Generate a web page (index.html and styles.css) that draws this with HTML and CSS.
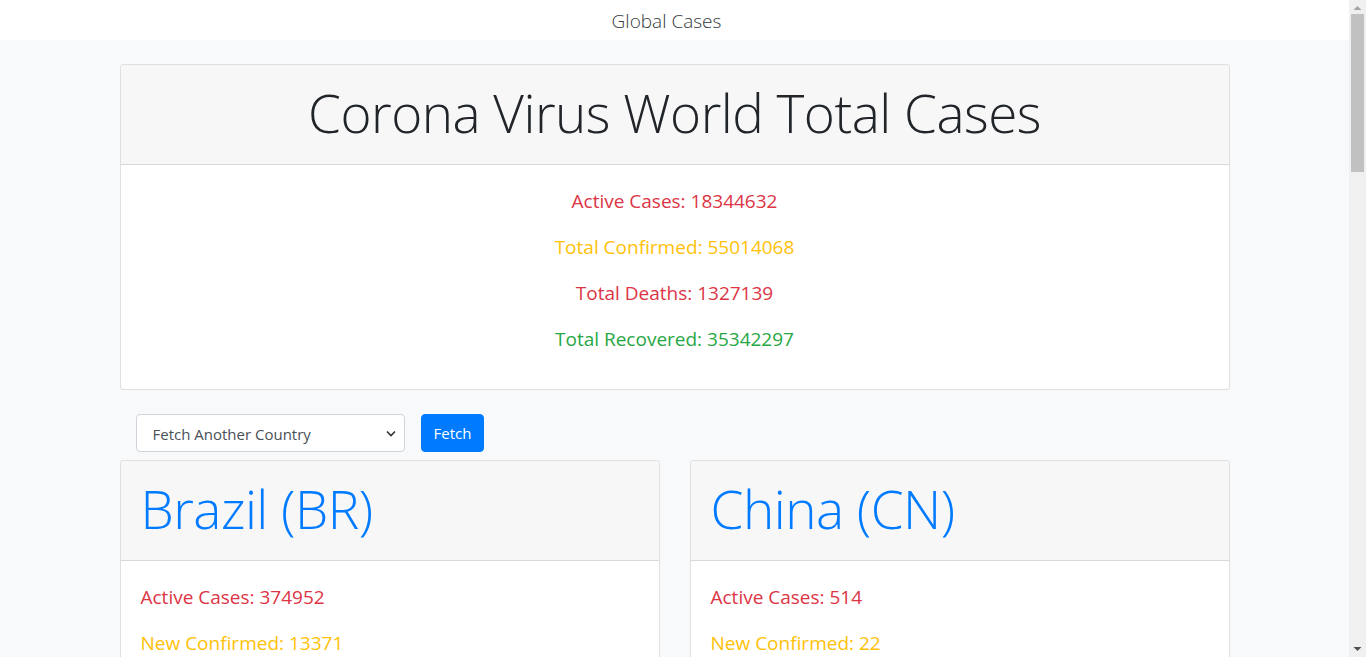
FILE: index.html
```html
<!DOCTYPE html>
<html lang="en">
<head>
<meta charset="utf-8">
<title>Global Cases</title>
<link rel="stylesheet" href="styles.css">
</head>
<body>
<div class="page">
<nav class="navbar"><span class="brand">Global Cases</span></nav>
<main class="container">
  <section class="card world">
    <div class="card-header"><h1 class="display">Corona Virus World Total Cases</h1></div>
    <div class="card-body center">
      <p class="danger">Active Cases: 18344632</p>
      <p class="warning">Total Confirmed: 55014068</p>
      <p class="danger">Total Deaths: 1327139</p>
      <p class="success">Total Recovered: 35342297</p>
    </div>
  </section>
  <form class="fetch-form">
    <span class="select-wrap">
      <select class="select"><option>Fetch Another Country</option></select>
      <svg class="chev" width="10" height="7" viewBox="0 0 10 7"><path d="M1 1.5l4 4 4-4" fill="none" stroke="#333" stroke-width="1.6"/></svg>
    </span>
    <button type="button" class="btn">Fetch</button>
  </form>
  <div class="row">
    <section class="card country">
      <div class="card-header"><h1 class="display primary">Brazil (BR)</h1></div>
      <div class="card-body">
        <p class="danger">Active Cases: 374952</p>
        <p class="warning">New Confirmed: 13371</p>
        <p class="warning">Total Confirmed: 5945849</p>
        <p class="danger">New Deaths: 302</p>
        <p class="danger">Total Deaths: 166699</p>
        <p class="success">New Recovered: 16210</p>
        <p class="success">Total Recovered: 5404198</p>
      </div>
    </section>
    <section class="card country">
      <div class="card-header"><h1 class="display primary">China (CN)</h1></div>
      <div class="card-body">
        <p class="danger">Active Cases: 514</p>
        <p class="warning">New Confirmed: 22</p>
        <p class="warning">Total Confirmed: 92227</p>
        <p class="danger">New Deaths: 0</p>
        <p class="danger">Total Deaths: 4742</p>
        <p class="success">New Recovered: 17</p>
        <p class="success">Total Recovered: 86971</p>
      </div>
    </section>
  </div>
</main>
</div>
<div class="scrollbar" aria-hidden="true">
  <svg class="sb-arrow" width="17" height="17" viewBox="0 0 17 17"><path d="M4.5 10h8L8.5 6z" fill="#a3a3a3"/></svg>
  <div class="sb-thumb"></div>
  <div class="sb-space"></div>
  <svg class="sb-arrow" width="17" height="17" viewBox="0 0 17 17"><path d="M4.5 7h8L8.5 11z" fill="#505050"/></svg>
</div>
</body>
</html>
```
FILE: styles.css
```css
* { box-sizing: border-box; }
html, body { margin: 0; }
body {
  font-family: "Open Sans", "Noto Sans", sans-serif;
  background: #f8f9fa;
  color: #212529;
  font-size: 16px;
  line-height: 1.5;
}
.page { margin-right: 17px; }
.navbar {
  background: #fff;
  height: 40px;
  display: flex;
  align-items: center;
  justify-content: center;
  padding: 2px 16px 0 0;
}
.brand {
  font-size: 19px;
  font-weight: 300;
  color: #343a40;
  line-height: 1;
}
.container {
  width: 1140px;
  margin: 0 auto;
  padding: 0 15px;
}
.card {
  background: #fff;
  border: 1px solid rgba(0,0,0,.125);
  border-radius: 4px;
  overflow: hidden;
}
.world { margin-top: 24px; }
.card-header {
  background: #f7f7f7;
  border-bottom: 1px solid rgba(0,0,0,.125);
  padding: 14px 20px 18px;
}
.display {
  margin: 0;
  font-size: 53px;
  font-weight: 300;
  line-height: 67px;
  text-align: center;
  letter-spacing: -0.5px;
}
.country .display { text-align: left; }
.wide { letter-spacing: 0.4px; }
.card-body { padding: 21px 20px 19px; }
.center { text-align: center; }
.card-body p {
  margin: 0 0 16px;
  font-size: 19px;
  line-height: 30px;
}
.danger { color: #dc3545; }
.warning { color: #ffc107; }
.success { color: #28a745; }
.primary { color: #007bff; }
.fetch-form {
  display: flex;
  gap: 16px;
  margin: 24px 0 8px 16px;
}
.select-wrap { position: relative; display: block; }
.select {
  appearance: none;
  -webkit-appearance: none;
  width: 269px;
  height: 38px;
  padding: 2px 30px 0 16px;
  border: 1px solid #ced4da;
  border-radius: 4px;
  background: #fff;
  color: #495057;
  font-family: inherit;
  font-size: 15px;
}
.chev {
  position: absolute;
  right: 9px;
  top: 16px;
  pointer-events: none;
}
.btn {
  height: 38px;
  padding: 0 12px;
  border: 1px solid #007bff;
  border-radius: 4px;
  background: #007bff;
  color: #fff;
  font-family: inherit;
  font-size: 15px;
  font-weight: 500;
}
.row {
  display: grid;
  grid-template-columns: 1fr 1fr;
  gap: 30px;
  padding-bottom: 24px;
}
.scrollbar {
  position: fixed;
  top: 0;
  right: 0;
  width: 17px;
  height: 100vh;
  background: #f0f0f0;
  display: flex;
  flex-direction: column;
  align-items: center;
}
.sb-arrow { flex: none; display: block; }
.sb-thumb {
  flex: none;
  width: 13px;
  height: 158px;
  margin-top: -3px;
  background: #c1c1c1;
}
.sb-space { flex: 1; }
```
